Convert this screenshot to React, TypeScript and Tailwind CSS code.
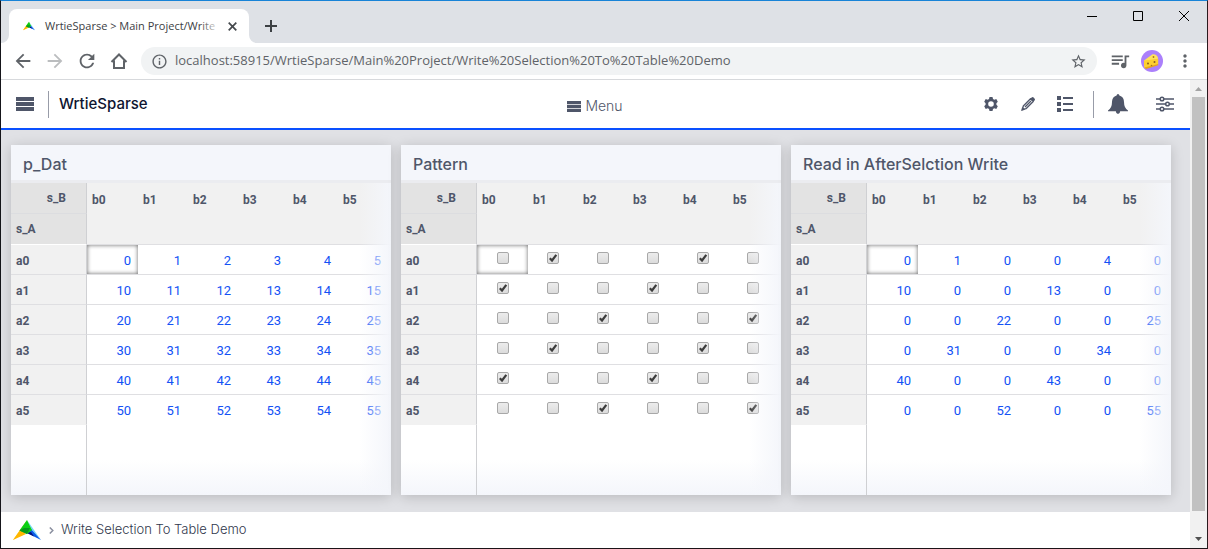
import React, { useState } from 'react';
import { MdArrowBack, MdArrowForward, MdInfoOutline, MdMoreVert, MdQueueMusic, MdRefresh, MdStarBorder } from 'react-icons/md';

const columns = ['b0', 'b1', 'b2', 'b3', 'b4', 'b5'];
const rowNames = ['a0', 'a1', 'a2', 'a3', 'a4', 'a5'];

const data = rowNames.map((_, r) => columns.map((_, c) => r * 10 + c));
const initialPattern = data.map((row, r) => row.map((_, c) => (r + c) % 3 === 1));

const Logo: React.FC<{ className?: string }> = ({ className }) => (
  <svg viewBox="0 0 28 20" className={className} aria-hidden="true">
    <path d="M14 0 0 20 9 14Z" fill="#f7e03a" />
    <path d="M0 20 7.500 9.500 13 14Z" fill="#ffb600" />
    <path d="M14 0 28 20 19 10Z" fill="#6fd8fb" />
    <path d="M28 20 14 13 18 9Z" fill="#0a5be8" />
    <path d="M14 13 18 12 21 16.500Z" fill="#04127c" />
    <path d="M14 0 6.500 10.500 14 14 19 10Z" fill="#0bcf14" />
    <path d="M11 8 6.500 10.500 14 14 17 8Z" fill="#089a1c" />
  </svg>
);

const Bars: React.FC<{ className?: string }> = ({ className }) => (
  <svg viewBox="0 0 18 14" preserveAspectRatio="none" className={className} fill="currentColor" aria-hidden="true">
    <path d="M0 0h18v4H0zM0 5h18v4H0zM0 10h18v4H0z" />
  </svg>
);

const TabStrip: React.FC = () => (
  <div className="flex h-[42px] items-stretch justify-between bg-[#dee1e6]">
    <div className="flex items-end">
      <svg viewBox="0 0 8 8" className="h-2 w-2 text-white" aria-hidden="true"><path d="M8 0v8H0a8 8 0 0 0 8-8z" fill="currentColor" /></svg>
      <div className="flex h-[34px] w-60 items-center rounded-t-lg bg-white pr-3 pl-3">
        <Logo className="mr-2 ml-0.5 h-[10px] w-3 shrink-0" />
        <div className="relative ml-0.5 min-w-0 flex-1 text-[11px] whitespace-nowrap text-[#3c4043]">
          WrtieSparse &gt; Main Project/Write
          <div className="absolute inset-y-0 right-0 w-5 bg-linear-to-r from-transparent to-white" />
        </div>
        <button aria-label="Close tab" className="ml-2 text-[#45494d]">
          <svg viewBox="0 0 9 9" className="h-[9px] w-[9px]"><path d="m.7.7 7.600 7.600M8.300.7.7 8.300" stroke="currentColor" strokeWidth="1.700" /></svg>
        </button>
      </div>
      <svg viewBox="0 0 8 8" className="h-2 w-2 text-white" aria-hidden="true"><path d="M0 0v8h8a8 8 0 0 1-8-8z" fill="currentColor" /></svg>
      <button aria-label="New tab" className="mb-[11px] ml-2 text-[#3c4043]">
        <svg viewBox="0 0 12 12" className="h-3 w-3"><path d="M6 0v12M0 6h12" stroke="currentColor" strokeWidth="2" /></svg>
      </button>
    </div>
    <div className="flex h-[29px] text-black">
      <button aria-label="Minimize" className="grid w-[46px] place-items-center"><svg viewBox="0 0 10 10" className="h-2.5 w-2.5"><path d="M0 5.500h10" stroke="currentColor" /></svg></button>
      <button aria-label="Maximize" className="grid w-[46px] place-items-center"><svg viewBox="0 0 10 10" className="h-2.5 w-2.5"><path d="M.5.5h9v9h-9z" fill="none" stroke="currentColor" /></svg></button>
      <button aria-label="Close" className="grid w-[46px] place-items-center"><svg viewBox="0 0 10 10" className="h-2.5 w-2.5"><path d="m0 0 10 10M10 0 0 10" stroke="currentColor" /></svg></button>
    </div>
  </div>
);

const Cheese: React.FC = () => (
  <svg viewBox="0 0 22 22" className="h-[22px] w-[22px]" aria-hidden="true">
    <circle cx="11" cy="11" r="11" fill="#ab80fb" />
    <path d="M3 10.500 11.500 4.300Q16.500 4 17.200 8.800L4.500 11.500Z" fill="#ffe35c" />
    <path d="M3 10.500 17.200 8.800V14.500L4.500 18.500Q3 18 3 16Z" fill="#fdd02f" />
    <path d="M3.500 17.500 17.200 14v1.200L5 19Z" fill="#e5a51c" />
    <circle cx="7" cy="13.500" r="1" fill="#8a5c20" />
    <circle cx="13.500" cy="12" r="1" fill="#8a5c20" />
    <circle cx="10.500" cy="15.500" r=".8" fill="#a87420" />
    <circle cx="12.500" cy="7" r=".9" fill="#a87420" />
  </svg>
);

const Toolbar: React.FC = () => (
  <div className="flex h-[37px] items-center border-b border-[#d7d9dc] bg-white pr-3 pl-[11px] text-[#5f6368]">
    <div className="flex shrink-0 gap-2.5">
      <button aria-label="Back"><MdArrowBack className="h-[22px] w-[22px]" /></button>
      <button aria-label="Forward" className="text-[#bbbdbf]"><MdArrowForward className="h-[22px] w-[22px]" /></button>
      <button aria-label="Reload"><MdRefresh className="h-[22px] w-[22px]" /></button>
      <button aria-label="Home">
        <svg viewBox="0 0 22 22" className="h-[22px] w-[22px]" fill="none" stroke="currentColor" strokeWidth="2"><path d="M3.500 12 11 4.500l7.500 7.500M6 10.500V18h10v-7.500" /></svg>
      </button>
    </div>
    <div className="ml-[11px] flex h-7 min-w-0 flex-1 items-center rounded-full bg-[#f1f3f4] pr-2.5 pl-2.5">
      <MdInfoOutline className="h-[17px] w-[17px] shrink-0" />
      <input
        aria-label="Address"
        className="ml-[7px] min-w-0 flex-1 bg-transparent text-[13px] outline-none"
        defaultValue="localhost:58915/WrtieSparse/Main%20Project/Write%20Selection%20To%20Table%20Demo"
      />
      <button aria-label="Bookmark"><MdStarBorder className="h-[17px] w-[17px]" /></button>
    </div>
    <button aria-label="Media" className="ml-3"><MdQueueMusic className="h-[22px] w-[22px]" /></button>
    <button aria-label="Profile" className="ml-2.5"><Cheese /></button>
    <button aria-label="More" className="ml-3"><MdMoreVert className="h-5 w-5" /></button>
  </div>
);

const AppHeader: React.FC = () => (
  <header className="grid h-[50px] grid-cols-[1fr_auto_1fr] items-center border-b-2 border-[#0a50ff] bg-white pr-4 pl-[15px] text-[#4f5669]">
    <div className="flex items-center">
      <button aria-label="Open menu"><Bars className="h-[14px] w-[18px]" /></button>
      <div className="ml-3.5 h-[27px] w-px bg-[#989ca8]" />
      <h1 className="ml-2.5 text-[15px] font-medium text-[#0e1430]">WrtieSparse</h1>
    </div>
    <button className="mt-1 flex items-center gap-1 text-sm font-light">
      <Bars className="h-[11px] w-[14px]" />
      Menu
    </button>
    <div className="flex items-center justify-end">
      <button aria-label="Settings">
        <svg viewBox="0 0 14 14" className="h-3.5 w-3.5">
          <path fill="currentColor" fillRule="evenodd" d="M5.500 0h3l.5 2 1.300.7 2-.6 1.500 2.600L12.400 6.200v1.600l1.400 1.500-1.500 2.600-2-.6-1.300.7-.5 2h-3L5 12l-1.300-.7-2 .6L.2 9.300l1.400-1.500V6.200L.2 4.700l1.500-2.600 2 .6L5 2ZM7 4.200a2.800 2.800 0 1 0 0 5.600 2.800 2.800 0 0 0 0-5.600Z" />
        </svg>
      </button>
      <button aria-label="Edit" className="ml-[22px]">
        <svg viewBox="0 0 16 16" className="h-4 w-4" fill="none" stroke="currentColor" strokeWidth="1.300">
          <path d="m2.500 13.500.8-3.500 7.200-7.200 2.700 2.700L6 12.700zM5 11l6-6" strokeLinejoin="round" />
          <path d="m10.300 2.700 3 3 1.300-1.300q.9-1-.1-2l-.9-.9q-1-1-2-.1Z" fill="currentColor" stroke="none" />
          <path d="m1 15 1.200-4 2.800 2.800Z" fill="currentColor" stroke="none" />
        </svg>
      </button>
      <button aria-label="List" className="ml-[21px]">
        <svg viewBox="0 0 16 16" className="h-4 w-4" fill="currentColor"><path d="M0 0h4v4H0zM0 6h4v4H0zM0 12h4v4H0zM6 1h10v2H6zM6 7h10v2H6zM6 13h10v2H6z" /></svg>
      </button>
      <div className="ml-5 h-[27px] w-px bg-[#989ca8]" />
      <button aria-label="Notifications" className="ml-3.5">
        <svg viewBox="0 0 20 20" className="h-5 w-5" fill="currentColor"><path d="M10 0q1.300 0 1.400 1.500Q16 2.800 16 8q0 6 4 8.500v.8h-7.800Q12 20 10 20t-2.200-2.700H0v-.8Q4 14 4 8q0-5.200 4.600-6.500Q8.700 0 10 0Z" /></svg>
      </button>
      <button aria-label="Adjust" className="ml-7">
        <svg viewBox="0 0 18 16" className="h-4 w-[18px]" fill="none" stroke="currentColor" strokeWidth="1.500"><path d="M0 3h4M8 3h10M0 8h9.500M13.500 8H18M0 13h4M8 13h10" /><circle cx="6" cy="3" r="1.800" /><circle cx="11.500" cy="8" r="1.800" /><circle cx="6" cy="13" r="1.800" /></svg>
      </button>
    </div>
  </header>
);

const Check: React.FC<{ label: string; checked: boolean; onChange: () => void }> = ({ label, checked, onChange }) => (
  <span className="relative mx-auto mb-1.5 block h-3 w-3">
    <input
      type="checkbox"
      aria-label={label}
      checked={checked}
      onChange={onChange}
      className="block h-3 w-3 appearance-none rounded-xs border border-[#a8a8a8] bg-linear-to-b from-[#ececec] to-[#dcdcdc]"
    />
    {checked && (
      <svg viewBox="0 0 12 12" className="pointer-events-none absolute inset-0 h-3 w-3" aria-hidden="true"><path d="M2.800 6.300 5 8.500l4.300-5.700" fill="none" stroke="#3c3c3c" strokeWidth="2.200" /></svg>
    )}
  </span>
);

interface PanelProps {
  title: string;
  cell: (r: number, c: number) => React.ReactNode;
}

const Panel: React.FC<PanelProps> = ({ title, cell }) => (
  <section className="relative flex flex-col bg-white shadow-[0_2px_12px_rgba(0,0,0,0.18)]">
    <h2 className="h-[38px] border-b-[3px] border-[#ebecf0] bg-[#f4f6fb] px-3 text-base leading-[38px] font-medium text-[#4f5669]">{title}</h2>
    <div className="relative flex flex-1 flex-col">
      <table className="w-full table-fixed border-separate border-spacing-0 text-[13px] text-[#1352f5]">
        <colgroup>
          <col className="w-[76px]" />
          <col className="w-[51px]" />
          {columns.slice(1).map((c) => <col key={c} className="w-[50px]" />)}
          <col />
        </colgroup>
        <thead className="text-xs text-[#4f5669]">
          <tr className="h-[31px]">
            <th className="border-r border-b border-r-[#cfd0d3] border-b-[#dcdde0] bg-[#e3e3e3] pr-5 text-right font-bold">s_B</th>
            {columns.map((c) => (
              <th key={c} rowSpan={2} className="border-b border-[#dfdfe2] bg-[#f1f1f1] pt-[9px] pl-[5px] text-left align-top font-bold">{c}</th>
            ))}
            <th rowSpan={2} className="border-b border-[#dfdfe2] bg-[#f1f1f1]" />
          </tr>
          <tr className="h-[31px]">
            <th className="border-r border-b border-r-[#cfd0d3] border-b-white bg-[#e3e3e3] pl-[5px] text-left font-bold">s_A</th>
          </tr>
        </thead>
        <tbody>
          {rowNames.map((name, r) => (
            <tr key={name} className="group h-[30px]">
              <th className="border-r border-b border-r-[#cfd0d3] border-b-[#dfdfe2] bg-[#f1f1f1] pt-[3px] pl-[5px] text-left text-xs font-bold text-[#4f5669] group-last:border-b-[#f1f1f1]">{name}</th>
              {columns.map((c, i) => (
                <td
                  key={c}
                  className={`border-b border-[#dfdfe2] px-[7px] pt-0.5 text-right group-last:border-transparent ${r === 0 && i === 0 ? 'shadow-[inset_0_0_4px_rgba(0,0,0,0.6)]' : ''}`}
                >
                  {cell(r, i)}
                </td>
              ))}
              <td className="border-b border-[#dfdfe2] group-last:border-transparent" />
            </tr>
          ))}
        </tbody>
      </table>
      <div className="flex min-h-[70px] flex-1 bg-linear-to-b from-white from-50% to-[#f4f6fb]">
        <div className="w-[76px] border-r border-[#cfd0d3]" />
      </div>
      <div className="pointer-events-none absolute inset-y-0 right-0 w-8 bg-linear-to-r from-[#f4f6fb]/0 to-[#f4f6fb]" />
    </div>
  </section>
);

const Scrollbar: React.FC = () => (
  <div className="flex w-[17px] shrink-0 flex-col items-center bg-[#f1f1f1]" aria-hidden="true">
    <svg viewBox="0 0 17 17" className="h-[17px] w-[17px]"><path d="M5 11h7L8.500 7Z" fill="#a3a3a3" /></svg>
    <div className="w-[13px] flex-1 bg-[#c1c1c1]" />
    <svg viewBox="0 0 17 37" className="h-[37px] w-[17px]"><path d="M5 26h7l-3.500 4Z" fill="#505050" /></svg>
  </div>
);

const App: React.FC = () => {
  const [pattern, setPattern] = useState(initialPattern);

  const toggle = (r: number, c: number) => {
    setPattern((prev) => prev.map((row, i) => row.map((v, j) => (i === r && j === c ? !v : v))));
  };

  return (
    <div className="flex min-h-screen flex-col border border-t-[#1883d7] border-r-[#2a1a1e] border-b-[#1c1418] border-l-[#15151a] bg-white font-['Open_Sans',sans-serif]">
      <TabStrip />
      <Toolbar />
      <div className="flex flex-1">
        <div className="flex min-w-0 flex-1 flex-col font-['Inter',sans-serif]">
          <AppHeader />
          <main className="grid flex-1 grid-cols-3 gap-2.5 bg-[#e0e1e5] pt-[15px] pr-[19px] pb-[17px] pl-2.5 [&_table]:font-['Roboto',sans-serif]">
            <Panel title="p_Dat" cell={(r, c) => data[r][c]} />
            <Panel
              title="Pattern"
              cell={(r, c) => <Check label={`${rowNames[r]} ${columns[c]}`} checked={pattern[r][c]} onChange={() => toggle(r, c)} />}
            />
            <Panel title="Read in AfterSelction Write" cell={(r, c) => (pattern[r][c] ? data[r][c] : 0)} />
          </main>
          <footer className="flex h-9 items-center bg-white pl-3 text-[13px] font-light text-[#30374c]">
            <Logo className="h-5 w-7" />
            <svg viewBox="0 0 5 7" className="mr-[7px] ml-2 h-[7px] w-[5px] text-[#8b90a0]" aria-hidden="true"><path d="m.8.5 3 3-3 3" fill="none" stroke="currentColor" strokeWidth="1.500" /></svg>
            Write Selection To Table Demo
          </footer>
        </div>
        <Scrollbar />
      </div>
    </div>
  );
};

export default App;
